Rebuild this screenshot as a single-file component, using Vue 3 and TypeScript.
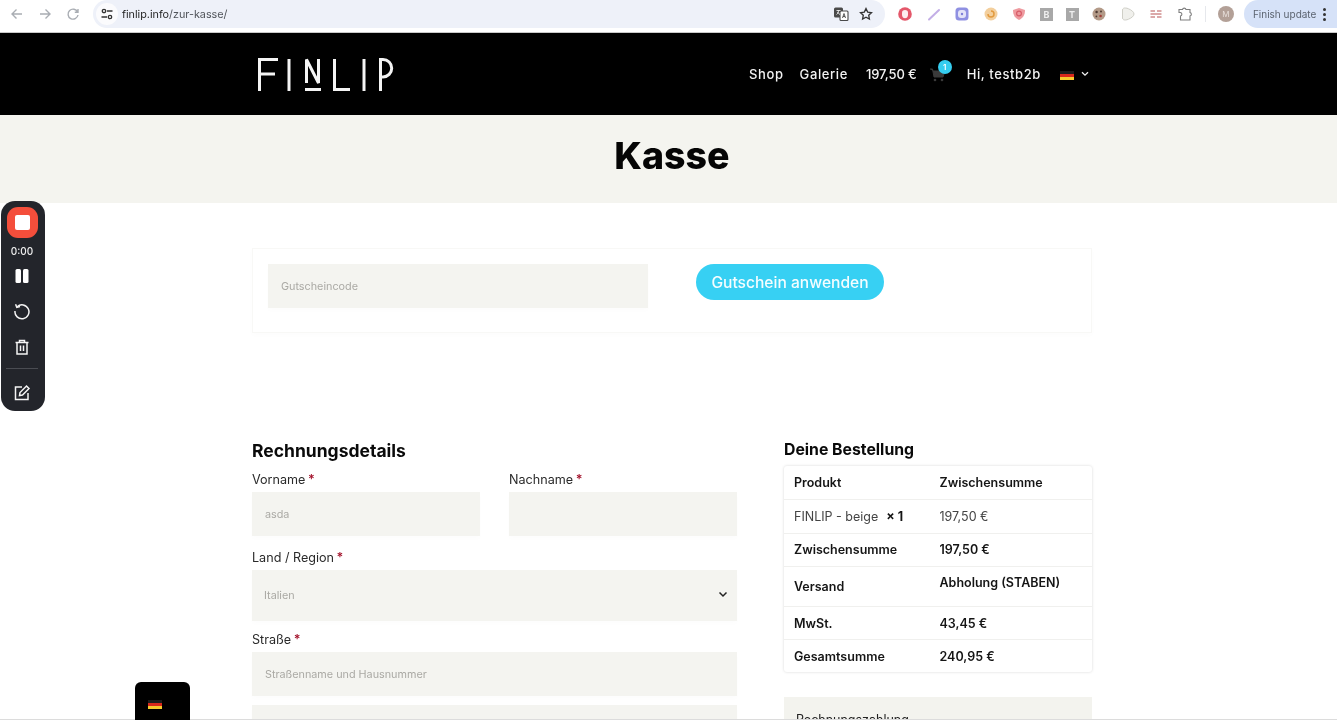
<script setup lang="ts">
const orderRows = [
  { label: "FINLIP - beige", qty: "× 1", value: "197,50 €", plain: true },
  { label: "Zwischensumme", value: "197,50 €" },
  { label: "Versand", value: "Abholung (STABEN)", tall: true },
  { label: "MwSt.", value: "43,45 €" },
  { label: "Gesamtsumme", value: "240,95 €" },
];
</script>

<template>
  <div class="page">
    <div class="browser-bar">
      <div class="nav-btns">
        <svg width="14" height="14" viewBox="0 0 14 14"><path d="M12 7H2M6.500 2.500 2 7l4.500 4.500" /></svg>
        <svg width="14" height="14" viewBox="0 0 14 14"><path d="M2 7h10M7.500 2.500 12 7l-4.500 4.500" /></svg>
        <svg width="14" height="14" viewBox="0 0 14 14"><path d="M11.600 5A5 5 0 1 0 12 8M12 2v3.200H8.800" /></svg>
      </div>
      <div class="address">
        <span class="tune">
          <svg width="14" height="14" viewBox="0 0 14 14"><circle cx="4" cy="4" r="1.700" /><path d="M7 4h5.500M1.500 10H7" /><circle cx="10" cy="10" r="1.700" /></svg>
        </span>
        <span class="url">finlip.info<span class="url-path">/zur-kasse/</span></span>
        <span class="addr-end">
          <svg width="16" height="16" viewBox="0 0 16 16"><rect x="1" y="1.500" width="9" height="10" rx="1.500" fill="#4a4a4a" /><rect x="7" y="5" width="8" height="9.500" rx="1" fill="#fff" stroke="#4a4a4a" stroke-width="1.100" /><path d="M3.500 4.500h4M5.500 4.500c0 2-1 3.500-2 4M4.500 6c.5 1 1.500 2 2.500 2.500" stroke="#fff" fill="none" stroke-width=".8" /><path d="M9.500 12 11 7.500l1.500 4.500M10 10.500h2" stroke="#4a4a4a" fill="none" stroke-width=".9" /></svg>
          <svg width="14" height="14" viewBox="0 0 14 14"><path d="m7 1.600 1.700 3.500 3.800.5-2.800 2.600.7 3.800L7 10.200 3.600 12l.7-3.800L1.500 5.600l3.800-.5z" fill="none" stroke="#333" stroke-width="1.300" /></svg>
        </span>
      </div>
      <div class="extensions">
        <svg width="16" height="16" viewBox="0 0 16 16"><circle cx="8" cy="8" r="6.800" fill="#e4576a" /><path d="M5 6.500c0-1.500 1-2.500 3-2.500s3 1 3 2.500V9c0 2-1.500 3.300-3 3.300S5 11 5 9z" fill="#fdeef0" /></svg>
        <svg width="16" height="16" viewBox="0 0 16 16"><path d="M3 13.500 13 4" stroke="#c3aee6" stroke-width="2" stroke-linecap="round" /></svg>
        <svg width="16" height="16" viewBox="0 0 16 16"><rect x="1.500" y="1.500" width="13" height="13" rx="3.500" fill="#8f90e2" /><rect x="4" y="4" width="8" height="8" rx="3" fill="#e3e3f8" /><circle cx="8" cy="8" r="1.200" fill="#7d7ed8" /></svg>
        <svg width="16" height="16" viewBox="0 0 16 16"><circle cx="8" cy="8" r="6.500" fill="#f3cf9d" /><path d="M5 8a3 3 0 1 0 3-3" fill="none" stroke="#e29a3e" stroke-width="1.500" /></svg>
        <svg width="16" height="16" viewBox="0 0 16 16"><path d="M8 2 14 4c0 5-2 8-6 10C4 12 2 9 2 4z" fill="#ee9a9f" /><circle cx="8" cy="7.500" r="2.400" fill="none" stroke="#d85c68" stroke-width="1.200" /></svg>
        <span class="ext-letter">B</span>
        <span class="ext-letter">T</span>
        <svg width="16" height="16" viewBox="0 0 16 16"><circle cx="8" cy="8" r="6.500" fill="#b39a88" /><circle cx="5.600" cy="6" r="1.200" fill="#4e3b32" /><circle cx="10" cy="5.500" r="1" fill="#4e3b32" /><circle cx="9.600" cy="10" r="1.300" fill="#a03c36" /><circle cx="5.400" cy="10.400" r=".9" fill="#4e3b32" /></svg>
        <svg width="16" height="16" viewBox="0 0 16 16"><path d="M2.500 4C2.500 2.500 4 1.800 5.500 2c1 .1 2 .2 3 .8C11.500 4 14 6 14 8s-2.500 4-5.500 5.200c-1 .6-2 .7-3 .8-1.500.2-3-.5-3-2z" fill="#f0f0ec" stroke="#c9c9c2" stroke-width=".9" /></svg>
        <svg width="16" height="16" viewBox="0 0 16 16"><path d="M2.500 5h4.500M9 5h4.500M2.500 8h11M2.500 11h4.500M9 11h4.500" stroke="#cf8d8d" stroke-width="1.300" /></svg>
        <svg width="16" height="16" viewBox="0 0 16 16"><path d="M2 3.500h3.500a1.800 1.800 0 0 1 3.500 0H13v3a1.800 1.800 0 0 1 0 3.500v4H3.500V10a1.800 1.800 0 0 0 0-3.500H2z" fill="none" stroke="#7f7f7f" stroke-width="1.100" /></svg>
      </div>
      <span class="divider"></span>
      <span class="avatar">M</span>
      <div class="update">Finish update<span class="dots"><i></i><i></i><i></i></span></div>
    </div>

    <header class="site-header">
      <div class="site-inner">
        <svg class="logo" width="136" height="34" viewBox="0 0 136 34" aria-label="FINLIP">
          <path d="M1.500 33V1.500H20M1.500 16H17M31 1v32M48.500 25V1.500L60.500 25V1M47 31.500h16M76.500 1v30.500H92M106 1v32M122.500 33V1.500H125a8.700 8.700 0 0 1 0 17.400h-2.500" />
        </svg>
        <nav class="site-nav">
          <span class="shop">Shop</span>
          <span>Galerie</span>
          <span class="price">197,50 €</span>
          <span class="cart">
            <svg width="17" height="15" viewBox="0 0 17 15"><path d="M1 2h2.500L5 10h9l2-6H4" fill="#3a3a3a" stroke="#3a3a3a" stroke-width="1" /><circle cx="6" cy="13" r="1.300" fill="#3a3a3a" /><circle cx="13" cy="13" r="1.300" fill="#3a3a3a" /></svg>
            <b class="badge">1</b>
          </span>
          <span class="user">Hi, testb2b</span>
          <span class="flag"><i></i><i></i><i></i></span>
          <svg class="nav-chevron" width="8" height="6" viewBox="0 0 8 6"><path d="M1 1.200 4 4.200l3-3" /></svg>
        </nav>
      </div>
    </header>

    <div class="title-band"><h1>Kasse</h1></div>

    <main class="content">
      <section class="coupon">
        <div class="field coupon-input">Gutscheincode</div>
        <button type="button" class="coupon-btn">Gutschein anwenden</button>
      </section>

      <div class="columns">
        <section class="billing">
          <h2>Rechnungsdetails</h2>
          <div class="name-row">
            <div>
              <label>Vorname <em>*</em></label>
              <div class="field">asda</div>
            </div>
            <div>
              <label>Nachname <em>*</em></label>
              <div class="field"></div>
            </div>
          </div>
          <label>Land / Region <em>*</em></label>
          <div class="field select">
            Italien
            <svg width="10" height="7" viewBox="0 0 10 7"><path d="M1.500 1.500 5 5l3.500-3.500" /></svg>
          </div>
          <label>Straße <em>*</em></label>
          <div class="field">Straßenname und Hausnummer</div>
          <div class="field extra"></div>
        </section>

        <aside class="order">
          <h3>Deine Bestellung</h3>
          <div class="order-table">
            <div class="order-row head">
              <span>Produkt</span><span>Zwischensumme</span>
            </div>
            <div
              v-for="row in orderRows"
              :key="row.label"
              class="order-row"
              :class="{ plain: row.plain, tall: row.tall }"
            >
              <span>{{ row.label }}<b v-if="row.qty" class="qty">{{ row.qty }}</b></span>
              <span class="val">{{ row.value }}</span>
            </div>
          </div>
          <div class="payment">Rechnungszahlung</div>
        </aside>
      </div>
    </main>

    <div class="recorder">
      <button type="button" class="rec-stop"><i></i></button>
      <span class="rec-time">0:00</span>
      <svg width="18" height="18" viewBox="0 0 18 18"><rect x="2.500" y="2" width="5.500" height="14" rx="1.500" fill="#fff" stroke="none" /><rect x="10" y="2" width="5.500" height="14" rx="1.500" fill="#fff" stroke="none" /></svg>
      <svg width="18" height="18" viewBox="0 0 18 18"><path d="M4.200 4.700A7 7 0 1 1 2 9" /><path d="M2.600 2.200 3.800 5.400 7 4.600" /></svg>
      <svg class="rec-trash" width="18" height="18" viewBox="0 0 18 18"><path d="M2.500 4.500h13M6.500 4.500V2.500h5v2M4 4.500V16h10V4.500M7.500 7.500v5.500M10.500 7.500v5.500" /></svg>
      <span class="rec-line"></span>
      <svg width="18" height="18" viewBox="0 0 18 18"><path d="M9 3H2.500v12.500H15V9" /><path d="M6.500 11.500 7 8.500 13.500 2l2.500 2.500L9.500 11z" /></svg>
    </div>

    <div class="bottom-line"></div>
    <div class="lang-widget"><span class="flag"><i></i><i></i><i></i></span></div>
  </div>
</template>

<style>
html,
body {
  margin: 0;
  height: 720px;
  overflow: hidden;
  background: #fff;
}
</style>

<style scoped>
.page {
  position: relative;
  height: 720px;
  overflow: hidden;
  font-family: Inter, "Liberation Sans", sans-serif;
  color: #111;
  background: #fff;
  filter: blur(0.35px);
}

.browser-bar {
  height: 28px;
  padding-bottom: 4px;
  display: flex;
  align-items: center;
  background: #fff;
  border-bottom: 1px solid #c9c9c9;
}

.nav-btns {
  display: flex;
  gap: 14px;
  padding-left: 10px;
  width: 93px;
  box-sizing: border-box;
}

.nav-btns svg {
  fill: none;
  stroke: #a9adb3;
  stroke-width: 1.400;
}

.address {
  width: 792px;
  height: 28px;
  flex: none;
  display: flex;
  align-items: center;
  background: #eef1f9;
  border-radius: 14px;
  font-size: 10.800px;
  color: #1f1f1f;
}

.tune {
  width: 22px;
  height: 22px;
  margin: 0 4px 0 3px;
  background: #fbfbfd;
  border-radius: 50%;
  display: flex;
  align-items: center;
  justify-content: center;
}

.tune svg {
  fill: none;
  stroke: #333;
  stroke-width: 1.300;
}

.url-path {
  color: #50545a;
}

.addr-end {
  margin-left: auto;
  display: flex;
  align-items: center;
  gap: 10px;
  padding-right: 12px;
}

.extensions {
  display: flex;
  align-items: center;
  gap: 12.600px;
  margin-left: 12px;
}

.ext-letter {
  width: 13px;
  height: 13px;
  background: #a8a8a8;
  color: #eee;
  font-size: 9px;
  font-weight: 700;
  line-height: 13px;
  text-align: center;
}

.divider {
  width: 1px;
  height: 16px;
  background: #e6e8ec;
  margin-left: 12px;
}

.avatar {
  width: 16px;
  height: 16px;
  flex: none;
  margin-left: 12px;
  border-radius: 50%;
  background: #b3a097;
  color: #e8dfdb;
  font-size: 8px;
  line-height: 16px;
  text-align: center;
}

.update {
  margin-left: 10px;
  flex: 1;
  height: 28px;
  border-radius: 14px 0 0 14px;
  background: #d6e2f8;
  display: flex;
  align-items: center;
  padding-left: 9px;
  font-size: 10px;
  color: #5c6470;
  white-space: nowrap;
}

.dots {
  display: flex;
  flex-direction: column;
  gap: 2px;
  margin-left: 7px;
}

.dots i {
  width: 3px;
  height: 3px;
  border-radius: 50%;
  background: #333;
}

.site-header {
  height: 82px;
  background: #000;
}

.site-inner {
  margin-left: 258px;
  width: 831px;
  height: 100%;
  display: flex;
  align-items: center;
  justify-content: space-between;
}

.logo {
  margin-top: 1px;
}

.logo path {
  fill: none;
  stroke: #f4f4f4;
  stroke-width: 3;
}

.site-nav {
  display: flex;
  align-items: center;
  color: #f2f2f2;
  font-size: 13px;
  font-weight: 500;
  letter-spacing: 0.600px;
}

.site-nav > span {
  margin-right: 18px;
}

.site-nav > .shop {
  margin-right: 16px;
}

.price {
  letter-spacing: -0.100px;
}

.site-nav > .price {
  margin-right: 12px;
}

.cart {
  position: relative;
  display: flex;
  margin-top: 1px;
}

.site-nav > .cart {
  margin-right: 21px;
}

.badge {
  position: absolute;
  right: -6px;
  top: -7px;
  width: 14px;
  height: 14px;
  border-radius: 50%;
  background: #35cdf0;
  color: #fff;
  font-size: 8px;
  font-weight: 600;
  line-height: 14px;
  text-align: center;
  letter-spacing: 0;
}

.flag {
  display: flex;
  flex-direction: column;
  width: 14px;
  height: 9px;
}

.flag i {
  flex: 1;
}

.flag i:nth-child(1) {
  background: #1c1c1c;
}

.flag i:nth-child(2) {
  background: #d8281c;
}

.flag i:nth-child(3) {
  background: #f7c92e;
}

.site-nav > .user {
  margin-right: 19px;
}

.site-nav > .flag {
  margin-right: 7px;
  margin-top: 2px;
}

.nav-chevron {
  margin-right: 0;
  fill: none;
  stroke: #eee;
  stroke-width: 1.300;
}

.title-band {
  height: 88px;
  box-sizing: border-box;
  padding: 0 0 8px 7px;
  background: #f4f4ef;
  display: flex;
  align-items: center;
  justify-content: center;
}

h1 {
  margin: 0;
  font-size: 37.500px;
  font-weight: 800;
  color: #050505;
}

.content {
  margin-left: 252px;
  width: 840px;
}

.coupon {
  margin-top: 45px;
  height: 85px;
  box-sizing: border-box;
  padding: 15px;
  border: 1px solid #f8f8f6;
  box-shadow: 0 2px 6px rgba(0, 0, 0, 0.015);
  display: flex;
  align-items: flex-start;
  gap: 48px;
}

.field {
  height: 44px;
  box-sizing: border-box;
  padding: 0 13px;
  display: flex;
  align-items: center;
  background: #f4f4f0;
  color: #aaa9a4;
  font-size: 10.800px;
  box-shadow: 0 3px 5px rgba(0, 0, 0, 0.012);
}

.coupon-input {
  width: 380px;
  flex: none;
}

.coupon-btn {
  width: 188px;
  height: 36px;
  border: 0;
  border-radius: 18px;
  background: #37d0f3;
  color: #f4fdff;
  font-family: inherit;
  font-size: 15.600px;
  font-weight: 500;
  padding: 0;
}

.columns {
  margin-top: 107px;
  display: flex;
  justify-content: space-between;
  align-items: flex-start;
}

.billing {
  width: 485px;
  display: flex;
  flex-direction: column;
}

h2 {
  margin: 0;
  font-size: 17.500px;
  line-height: 22px;
  font-weight: 700;
  color: #0a0a0a;
}

label {
  display: block;
  font-size: 12.600px;
  line-height: 16px;
  color: #2a2a2a;
  margin-bottom: 4px;
}

label em {
  font-style: normal;
  color: #a3122b;
  font-weight: 600;
  margin-left: -1px;
}

.name-row {
  display: grid;
  grid-template-columns: 228px 228px;
  column-gap: 29px;
  margin-top: 10px;
  margin-bottom: 14px;
}

.select {
  height: 51px;
  justify-content: space-between;
  padding: 0 9px 0 12px;
  margin-bottom: 11px;
}

.select svg {
  fill: none;
  stroke: #222;
  stroke-width: 1.500;
  margin-top: -3px;
}

.extra {
  margin-top: 9px;
}

.order {
  width: 308px;
  margin-top: -1px;
}

h3 {
  margin: 0 0 5px;
  font-size: 15.800px;
  line-height: 22px;
  font-weight: 700;
  color: #0a0a0a;
}

.order-table {
  border-radius: 3px;
  box-shadow: 0 0 3px rgba(0, 0, 0, 0.16);
  font-size: 12.500px;
  font-weight: 600;
  color: #151515;
}

.order-row {
  height: 33.300px;
  box-sizing: border-box;
  display: grid;
  grid-template-columns: 145.500px 1fr;
  align-items: center;
  padding-left: 10px;
  border-top: 1px solid #f0f0ee;
}

.order-row.head {
  border-top: 0;
}

.order-row.plain {
  font-weight: 400;
  color: #444;
}

.order-row.tall {
  height: 40px;
}

.order-row.tall .val {
  align-self: start;
  margin-top: 8px;
}

.qty {
  margin-left: 8px;
  font-weight: 700;
  color: #151515;
}

.payment {
  margin-top: 25px;
  height: 60px;
  box-sizing: border-box;
  padding: 15px 12px;
  background: #f3f3ee;
  font-size: 12.500px;
  color: #222;
}

.recorder {
  position: absolute;
  left: 1px;
  top: 201px;
  width: 44px;
  height: 210px;
  box-sizing: border-box;
  padding: 6px 2px 0 0;
  border-radius: 14px;
  background: #23252b;
  display: flex;
  flex-direction: column;
  align-items: center;
}

.recorder svg {
  fill: none;
  stroke: #f4f4f4;
  stroke-width: 1.500;
  margin-top: 17px;
}

.recorder .rec-trash {
  margin-top: 18px;
}

.rec-stop {
  width: 31px;
  height: 31px;
  border: 0;
  padding: 0;
  border-radius: 11px;
  background: #f44e3b;
  display: flex;
  align-items: center;
  justify-content: center;
}

.rec-stop i {
  width: 15px;
  height: 15px;
  border-radius: 2px;
  background: #fff;
}

.rec-time {
  margin-top: 7px;
  margin-bottom: -7px;
  font-size: 10px;
  line-height: 12px;
  font-weight: 500;
  color: #f0f0f0;
}

.recorder .rec-line {
  width: 32px;
  height: 1px;
  margin-top: 12px;
  margin-bottom: -2px;
  background: #4a4c52;
}

.lang-widget {
  position: absolute;
  left: 135px;
  top: 682px;
  width: 55px;
  height: 38px;
  border-radius: 6px 6px 0 0;
  background: #000;
}

.lang-widget .flag {
  margin: 18px 0 0 13px;
}

.bottom-line {
  position: absolute;
  left: 0;
  right: 0;
  bottom: 0;
  height: 1.500px;
  background: #dcdcdc;
}
</style>
